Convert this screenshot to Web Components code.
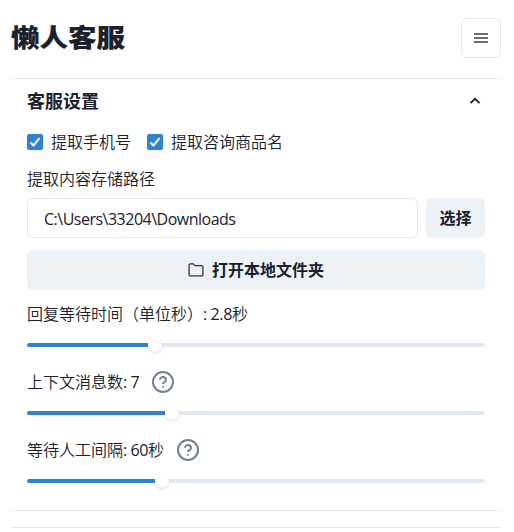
<!DOCTYPE html>
<html lang="zh-CN">
<head>
<meta charset="utf-8">
<title>懒人客服</title>
<style>
html,body{margin:0;background:#fff}
body{font:350 16px/24px "Open Sans","Noto Sans CJK SC",sans-serif;color:#1a202c;overflow:hidden}
</style>
</head>
<body>
<settings-app></settings-app>
<script>
const define = (name, html, init) => customElements.define(name, class extends HTMLElement {
  connectedCallback() {
    if (this.shadowRoot) return;
    const root = this.attachShadow({ mode: 'open' });
    root.innerHTML = html;
    if (init) init(this, root);
  }
});

define('brand-title', `<style>
:host{display:block;height:36px;font:900 28.5px/36px "Noto Sans CJK SC",sans-serif;-webkit-text-stroke:.2px #1a202c;white-space:nowrap;transform:scaleY(.88)}
</style><slot></slot>`);

define('menu-button', `<style>
:host{display:flex;box-sizing:border-box;width:40px;height:40px;border:1px solid #e2e8f0;border-radius:6px;align-items:center;justify-content:center}
svg{display:block}
</style><svg width="14" height="12" viewBox="0 0 14 12" fill="#6b6c76"><path d="M0 1h14v2H0zM0 5h14v2H0zM0 9h14v2H0z"/></svg>`);

define('check-option', `<style>
:host{display:flex;align-items:center;gap:8px;white-space:nowrap}
i{display:flex;width:16px;height:16px;border-radius:2px;background:#3182ce;align-items:center;justify-content:center}
</style><i><svg width="12" height="10" viewBox="0 0 12 10" fill="none" stroke="#fff" stroke-width="2"><path d="M1.5 5.5 4.5 8.5 10.5 1.2"/></svg></i><span><slot></slot></span>`);

define('path-input', `<style>
:host{display:flex;box-sizing:border-box;flex:1;height:40px;border:1px solid #e2e8f0;border-radius:6px;padding:2px 16px 0;align-items:center;font-weight:400;letter-spacing:-.5px}
</style><span><slot></slot></span>`);

define('soft-button', `<style>
:host{display:flex;height:40px;border-radius:6px;background:#edf2f7;align-items:center;justify-content:center;gap:8px;font-weight:600;white-space:nowrap}
</style><slot name="icon"></slot><span><slot></slot></span>`);

define('folder-icon', `<style>:host{display:block;width:16px;height:16px}svg{display:block}</style>
<svg width="16" height="16" viewBox="0 0 16 16" fill="none" stroke="#2d3340" stroke-width="1.3" stroke-linejoin="round"><path d="M2.3 1.8h3l1.6 1.9h6.8a1.2 1.2 0 0 1 1.2 1.2v7.8a1.2 1.2 0 0 1-1.2 1.2H2.3a1.2 1.2 0 0 1-1.2-1.2V3a1.2 1.2 0 0 1 1.2-1.2z"/></svg>`);

define('help-icon', `<style>:host{display:block;width:24px;height:24px}svg{display:block}</style>
<svg width="24" height="24" viewBox="0 0 24 24" fill="none" stroke="#718096" stroke-width="2" stroke-linecap="round" stroke-linejoin="round"><circle cx="12" cy="12" r="10"/><path d="M9.09 9a3 3 0 0 1 5.83 1c0 2-3 3-3 3M12 17h.01"/></svg>`);

define('range-slider', `<style>
:host{display:flex;height:14px;align-items:center}
.fill,.rest{height:4px;background:#3182ce;border-radius:2px 0 0 2px}
.fill{width:calc(var(--at) - 7px)}
.rest{flex:1;background:#e2e8f0;border-radius:0 2px 2px 0}
.thumb{width:14px;height:14px;border-radius:50%;background:#fff;box-shadow:0 1px 3px rgba(0,0,0,.1),0 1px 2px rgba(0,0,0,.06);margin-right:-1px;z-index:1}
</style><div class="fill"></div><div class="thumb"></div><div class="rest"></div>`);

define('slider-field', `<style>
:host{display:block;height:68px}
.label{display:flex;height:24px;align-items:center;white-space:nowrap}
.value{font-weight:400;letter-spacing:-.4px;white-space:pre}
::slotted(help-icon){margin-left:11.5px}
range-slider{margin-top:12px}
</style><div class="label"><slot></slot><span class="value">: <slot name="value"></slot></span><slot name="unit"></slot><slot name="help"></slot></div><range-slider></range-slider>`,
(host, root) => root.querySelector('range-slider').style.setProperty('--at', host.getAttribute('at') + 'px'));

define('settings-panel', `<style>
:host{display:block;box-sizing:border-box;height:433px;border:solid #e2e8f0;border-width:1px 0;padding:0 16px}
header{display:flex;height:44px;align-items:center;justify-content:space-between;font-size:18px;font-weight:700}
svg{display:block;margin-right:4px}
</style><header><span><slot name="title"></slot></span><svg width="12" height="8" viewBox="0 0 12 8" fill="none" stroke="#1a202c" stroke-width="1.8"><path d="M1.5 6.2 6 1.8l4.5 4.4"/></svg></header><slot></slot>`);

define('settings-app', `<style>
:host{display:block;padding:18px 13px 0 11px}
.top{display:flex;height:60px;justify-content:space-between;align-items:flex-start}
.checks{display:flex;gap:16px;height:24px;margin-top:7px}
.caption{height:24px;margin:13px 0 7px}
.path{display:flex;gap:8px;margin-bottom:12px}
.path soft-button{width:59px}
.sliders{margin-top:12px}
.next{height:1px;background:#e2e8f0;margin-top:16px}
</style>
<div class="top"><brand-title>懒人客服</brand-title><menu-button></menu-button></div>
<settings-panel><span slot="title">客服设置</span>
<div class="checks"><check-option>提取手机号</check-option><check-option>提取咨询商品名</check-option></div>
<div class="caption">提取内容存储路径</div>
<div class="path"><path-input>C:\\Users\\33204\\Downloads</path-input><soft-button>选择</soft-button></div>
<soft-button><folder-icon slot="icon"></folder-icon>打开本地文件夹</soft-button>
<div class="sliders">
<slider-field at="128">回复等待时间（单位秒）<span slot="value">2.8</span><span slot="unit">秒</span></slider-field>
<slider-field at="145">上下文消息数<span slot="value">7</span><help-icon slot="help"></help-icon></slider-field>
<slider-field at="135">等待人工间隔<span slot="value">60</span><span slot="unit">秒</span><help-icon slot="help"></help-icon></slider-field>
</div>
</settings-panel>
<div class="next"></div>`);
</script>
</body>
</html>
